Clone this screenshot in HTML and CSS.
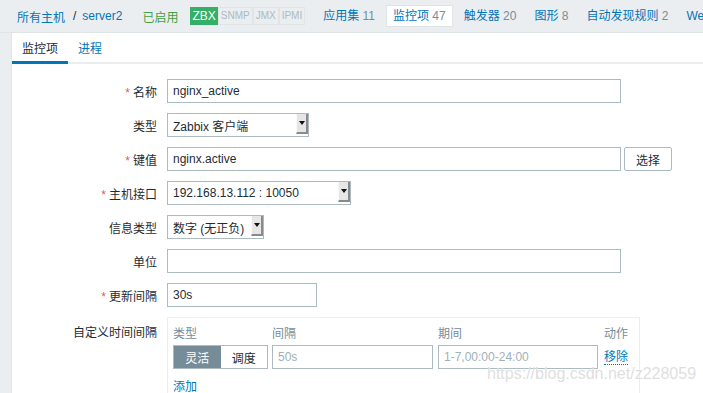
FILE: index.html
```html
<!DOCTYPE html>
<html>
<head>
    <link rel="stylesheet" href="styles.css">
</head>
<body>
    <div class="topnav">
        <a class="crumb" href="#">所有主机</a>
        <span class="sep">/</span>
        <a class="crumb" href="#">server2</a>
        <span class="status">已启用</span>
        <span class="badges">
            <span class="badge on">ZBX</span><span class="badge">SNMP</span><span class="badge">JMX</span><span class="badge">IPMI</span>
        </span>
        <a class="nav-item" href="#">应用集 <span class="count">11</span></a>
        <a class="nav-item active" href="#">监控项 <span class="count">47</span></a>
        <a class="nav-item" href="#">触发器 <span class="count">20</span></a>
        <a class="nav-item" href="#">图形 <span class="count">8</span></a>
        <a class="nav-item" href="#">自动发现规则 <span class="count">2</span></a>
        <a class="nav-item" href="#">Web</a>
    </div>
    <div class="panel">
        <div class="tabs">
            <span class="tab current">监控项</span>
            <a class="tab" href="#">进程</a>
        </div>
        <div class="form">
            <div class="row">
                <label class="lbl"><i>*</i>名称</label>
                <input class="inp wide" type="text" value="nginx_active">
            </div>
            <div class="row">
                <label class="lbl">类型</label>
                <div class="select" style="width: 142px">Zabbix 客户端<span class="arrow"></span></div>
            </div>
            <div class="row">
                <label class="lbl"><i>*</i>键值</label>
                <input class="inp wide" type="text" value="nginx.active">
                <button class="btn">选择</button>
            </div>
            <div class="row">
                <label class="lbl"><i>*</i>主机接口</label>
                <div class="select" style="width: 184px">192.168.13.112 : 10050<span class="arrow"></span></div>
            </div>
            <div class="row">
                <label class="lbl">信息类型</label>
                <div class="select" style="width: 97px">数字 (无正负)<span class="arrow"></span></div>
            </div>
            <div class="row">
                <label class="lbl">单位</label>
                <input class="inp wide" type="text" value="">
            </div>
            <div class="row">
                <label class="lbl"><i>*</i>更新间隔</label>
                <input class="inp short" type="text" value="30s">
            </div>
            <div class="row top">
                <label class="lbl">自定义时间间隔</label>
                <div class="intervals">
                    <div class="ihead">
                        <span class="c-type">类型</span>
                        <span class="c-int">间隔</span>
                        <span class="c-per">期间</span>
                        <span class="c-act">动作</span>
                    </div>
                    <div class="irow">
                        <span class="c-type seg"><span class="seg-on">灵活</span><span class="seg-off">调度</span></span>
                        <input class="inp c-int" type="text" placeholder="50s">
                        <input class="inp c-per" type="text" placeholder="1-7,00:00-24:00">
                        <a class="c-act remove" href="#">移除</a>
                    </div>
                    <a class="add" href="#">添加</a>
                </div>
            </div>
        </div>
    </div>
    <div class="watermark">https://blog.csdn.net/z228059</div>
</body>
</html>
```
FILE: styles.css
```css
body {
    margin: 0;
    background-color: #ebeef0;
    font-family: "Liberation Sans", "Noto Sans CJK SC", sans-serif;
    font-size: 12px;
    color: #1f2c33;
    height: 393px;
    overflow: hidden;
    position: relative;
}
a {
    color: #0275b8;
    text-decoration: none;
}
.topnav {
    display: flex;
    align-items: center;
    height: 32px;
    padding-left: 17px;
    border-bottom: 1px solid #dfe4e7;
    white-space: nowrap;
    overflow: hidden;
}
.sep {
    margin: 0 6px 0 8px;
}
.status {
    color: #429e47;
    margin-left: 20px;
}
.badges {
    display: flex;
    margin-left: 12px;
    margin-right: 11px;
}
.badge {
    border: 1px solid #dfe4e7;
    background-color: #ebeef0;
    color: #acbbc2;
    font-size: 10px;
    padding: 0 2px;
    height: 16px;
    line-height: 16px;
}
.badge.on {
    background-color: #34af67;
    border-color: #34af67;
    color: #fff;
    font-size: 12px;
    padding: 0 1px;
}
.nav-item {
    padding: 3px 6px;
    margin-right: 4px;
    line-height: 14px;
    border: 1px solid transparent;
}
.nav-item.active {
    background-color: #fff;
    border-color: #dfe4e7;
}
.count {
    color: #768d99;
}
.panel {
    margin-left: 11px;
    background-color: #fff;
    border-left: 1px solid #dfe4e7;
    height: 400px;
}
.tabs {
    display: flex;
    height: 29px;
    border-bottom: 2px solid #ebeef0;
}
.tab {
    padding: 6px 10px 0 10px;
    font-size: 12px;
}
.tab.current {
    border-bottom: 3px solid #0275b8;
    color: #1f2c33;
    margin-bottom: -2px;
}
.form {
    padding-top: 15px;
}
.row {
    display: flex;
    align-items: center;
    margin-bottom: 10px;
}
.row.top {
    align-items: flex-start;
}
.lbl {
    width: 145px;
    padding-right: 10px;
    text-align: right;
    flex-shrink: 0;
}
.row.top .lbl {
    padding-top: 6px;
}
.lbl i {
    font-style: normal;
    color: #e45959;
    margin-right: 3px;
}
.inp {
    box-sizing: border-box;
    height: 24px;
    border: 1px solid #acbbc2;
    padding: 0 5px;
    font-family: "Liberation Sans", "Noto Sans CJK SC", sans-serif;
    font-size: 12px;
    color: #1f2c33;
    background-color: #fff;
    outline: none;
}
.inp::placeholder {
    color: #a0b0b8;
}
.wide {
    width: 454px;
}
.short {
    width: 150px;
}
.btn {
    box-sizing: border-box;
    height: 24px;
    width: 48px;
    margin-left: 3px;
    border: 1px solid #acbbc2;
    border-radius: 2px;
    background-color: #fff;
    color: #1f2c33;
    font-family: "Liberation Sans", "Noto Sans CJK SC", sans-serif;
    font-size: 12px;
}
.select {
    box-sizing: border-box;
    height: 24px;
    border: 1px solid #acbbc2;
    padding-left: 5px;
    display: flex;
    align-items: center;
    justify-content: space-between;
    background-color: #fff;
    white-space: nowrap;
}
.arrow {
    width: 12px;
    height: 20px;
    background-color: #e6e6e6;
    border-left: 1px solid #f8f8f8;
    border-right: 2px solid #8a8a8a;
    border-bottom: 2px solid #8a8a8a;
    box-sizing: border-box;
    display: flex;
    align-items: center;
    justify-content: center;
    align-self: flex-start;
}
.arrow::after {
    content: "";
    border-left: 3px solid transparent;
    border-right: 3px solid transparent;
    border-top: 4px solid #111;
}
.intervals {
    box-sizing: border-box;
    width: 473px;
    border: 1px solid #ebeef0;
    padding: 5px 0 0 5px;
    height: 90px;
}
.ihead {
    display: flex;
    color: #768d99;
    height: 17px;
    align-items: center;
    margin-top: 1px;
}
.irow {
    display: flex;
    align-items: center;
    margin-top: 4px;
}
.c-type {
    width: 95px;
    margin-right: 4px;
}
.c-int {
    width: 161px;
    margin-right: 5px;
}
.c-per {
    width: 160px;
    margin-right: 6px;
}
.seg {
    display: flex;
    height: 24px;
    box-sizing: border-box;
    border: 1px solid #acbbc2;
}
.seg span {
    flex: 1;
    display: flex;
    align-items: center;
    justify-content: center;
}
.seg-on {
    background-color: #768d99;
    color: #fff;
}
.remove {
    border-bottom: 1px dotted #0275b8;
    line-height: 14px;
}
.add {
    display: inline-block;
    margin-top: 8px;
}
.watermark {
    position: absolute;
    left: 487px;
    top: 365px;
    font-size: 16px;
    color: rgba(200, 200, 200, 0.6);
    text-shadow: 0 0 1px #fff;
}
```
